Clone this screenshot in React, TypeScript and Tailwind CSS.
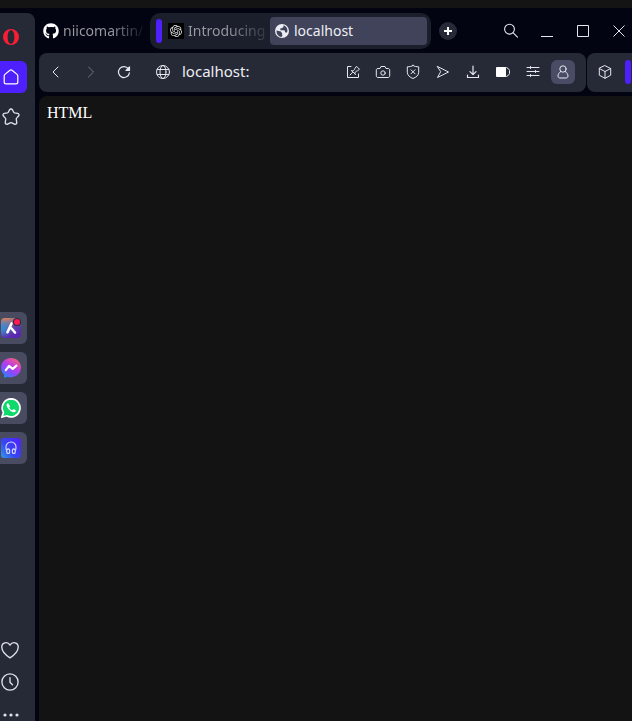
import type { ReactNode } from "react";
import { FaGithub } from "react-icons/fa";
import { SiOpenai } from "react-icons/si";

type IconProps = { children: ReactNode; size?: string; width?: number };

function Icon({ children, size = "size-4", width = 1 }: IconProps) {
  return (
    <svg
      viewBox="0 0 16 16"
      className={`${size} shrink-0`}
      fill="none"
      stroke="currentColor"
      strokeWidth={width}
      strokeLinecap="round"
      strokeLinejoin="round"
      aria-hidden="true"
    >
      {children}
    </svg>
  );
}

function ToolButton({ label, children, active = false }: { label: string; children: ReactNode; active?: boolean }) {
  return (
    <button
      aria-label={label}
      className={`flex size-6 shrink-0 items-center justify-center rounded-md text-[#e6e7ee] ${active ? "bg-[#4a4c66]" : ""}`}
    >
      {children}
    </button>
  );
}

function SideApp({ label, children }: { label: string; children: ReactNode }) {
  return (
    <button aria-label={label} className="flex h-8 w-full items-center rounded-r-md bg-[#494c60] pl-px">
      {children}
    </button>
  );
}

function Sidebar() {
  return (
    <aside className="flex w-[35px] shrink-0 flex-col rounded-tr-lg bg-[#262a37] pr-2 text-[#dfe0e8]">
      <button aria-label="Opera menu" className="flex h-12 w-full items-center pl-[3px]">
        <svg viewBox="0 0 16 16" className="size-4" aria-hidden="true">
          <path
            fill="#fa1e34"
            fillRule="evenodd"
            d="M8 0a8 8 0 1 0 0 16A8 8 0 0 0 8 0ZM8 1.2c2 0 3.400 2.700 3.400 6.800S10 14.800 8 14.800 4.600 12.100 4.600 8 6 1.200 8 1.200Z"
          />
        </svg>
      </button>
      <nav className="flex flex-col gap-2">
        <button aria-label="Home" className="flex h-8 w-full items-center rounded-r-md bg-[#4f20fe] pl-[3px] text-white">
          <Icon width={1.2}>
            <path d="M1.200 6.900c0-.6.300-1.100.7-1.500L7 1.200c.6-.5 1.400-.5 2 0l5.100 4.200c.4.400.7.900.7 1.500v6c0 1.100-.8 1.900-1.900 1.900H3.100c-1.100 0-1.900-.8-1.900-1.900z" />
          </Icon>
        </button>
        <button aria-label="Speed dial" className="flex h-8 w-full items-center pl-[2px]">
          <Icon size="size-[18px]" width={1.200}>
            <path d="M6.700 1.600c.5-.9 2.100-.9 2.600 0l1 2c.2.400.5.600.9.700l2.700.5c1.200.2 1.600 1.400.8 2.300l-1.700 1.900c-.3.300-.4.700-.3 1.100l.4 2.800c.2 1.200-1 1.900-2.100 1.400l-2.300-1.100c-.5-.2-.9-.2-1.400 0l-2.300 1.100c-1.100.5-2.300-.2-2.100-1.400l.4-2.800c.1-.4 0-.8-.3-1.100L1.300 7.100c-.8-.9-.4-2.100.8-2.300l2.700-.5c.4-.1.700-.3.900-.7z" />
          </Icon>
        </button>
      </nav>
      <div className="mt-[179px] flex flex-col gap-2">
        <SideApp label="Aria">
          <svg viewBox="0 0 20 20" className="size-5" aria-hidden="true">
            <defs>
              <linearGradient id="aria" x1="0" y1="0" x2="0.500" y2="1">
                <stop offset="0" stopColor="#ef8648" />
                <stop offset="0.350" stopColor="#95718a" />
                <stop offset="0.650" stopColor="#5c42a8" />
                <stop offset="1" stopColor="#5a25b4" />
              </linearGradient>
              <radialGradient id="ariaBlue" cx="0.100" cy="0.500" r="0.500">
                <stop offset="0" stopColor="#318ed8" />
                <stop offset="1" stopColor="#318ed8" stopOpacity="0" />
              </radialGradient>
            </defs>
            <rect width="20" height="20" rx="4" fill="url(#aria)" />
            <rect width="20" height="20" rx="4" fill="url(#ariaBlue)" />
            <path d="M10.500 5.500 6.500 14.200M10.500 10.500l3.500 4" stroke="#fff" strokeWidth="2.600" strokeLinecap="round" />
            <circle cx="16" cy="4" r="4" fill="#262a37" />
            <circle cx="16" cy="4" r="3" fill="#ff1a51" />
          </svg>
        </SideApp>
        <SideApp label="Messenger">
          <svg viewBox="0 0 20 20" className="size-5" aria-hidden="true">
            <defs>
              <linearGradient id="messenger" x1="0.800" y1="0" x2="0.150" y2="1">
                <stop offset="0" stopColor="#f8636e" />
                <stop offset="0.400" stopColor="#bd3de8" />
                <stop offset="0.650" stopColor="#854bff" />
                <stop offset="1" stopColor="#1594ff" />
              </linearGradient>
            </defs>
            <path d="M10 0C4.400 0 0 4.100 0 9.600c0 2.900 1.200 5.400 3.200 7.100V20l3.200-1.300c1.100.4 2.300.5 3.600.5 5.600 0 10-4.100 10-9.600S15.600 0 10 0Z" fill="url(#messenger)" />
            <path d="m4.800 12.200 3.200-4.200 3.700 2.800 3.700-3.200" fill="none" stroke="#fff" strokeWidth="2.200" strokeLinejoin="round" strokeLinecap="round" />
          </svg>
        </SideApp>
        <SideApp label="WhatsApp">
          <svg viewBox="0 0 20 20" className="size-5" aria-hidden="true">
            <path d="M10.200.9a9 9 0 0 0-7.800 13.500L1 19l4.700-1.200A9 9 0 1 0 10.200.9Z" fill="#10d96c" stroke="#fff" strokeWidth="1.700" />
            <path d="M7.300 5.400c-.4-.2-1 0-1.400.6-1.500 2.500 3.700 8.100 6.700 8.200 1.500.1 2.300-.9 2.200-2l-2.300-1.200-1.200 1.300c-1.400-.5-2.500-1.600-3.100-2.900l.8-1.200z" fill="#fff" />
          </svg>
        </SideApp>
        <SideApp label="Player">
          <svg viewBox="0 0 20 20" className="size-5" aria-hidden="true">
            <defs>
              <linearGradient id="player" x1="0" y1="1" x2="1" y2="0.200">
                <stop offset="0" stopColor="#319de8" />
                <stop offset="0.450" stopColor="#3547f2" />
                <stop offset="1" stopColor="#4f25fa" />
              </linearGradient>
            </defs>
            <rect width="20" height="20" rx="3" fill="url(#player)" />
            <g fill="none" stroke="#d9daff" strokeWidth="1.100">
              <path d="M5.600 12.500C4.900 10.900 5 9.500 5 9a5 5 0 0 1 10 0c0 .5.100 1.900-.6 3.500" />
              <ellipse cx="7.200" cy="13.200" rx="1.500" ry="2.300" />
              <ellipse cx="12.800" cy="13.200" rx="1.500" ry="2.300" />
            </g>
          </svg>
        </SideApp>
      </div>
      <div className="mt-auto flex flex-col">
        <button aria-label="Favourites" className="flex h-8 w-full items-center pl-px">
          <Icon size="size-[18px]" width={1.200}>
            <path d="M8 15C6.500 14 .7 9.700.7 5.300.7 1.200 5.900.100 8 3.700 10.100.100 15.300 1.200 15.300 5.300 15.300 9.700 9.500 14 8 15Z" />
          </Icon>
        </button>
        <button aria-label="History" className="flex h-8 w-full items-center pl-px">
          <Icon size="size-[18px]" width={1.200}>
            <circle cx="8" cy="8" r="7.200" />
            <path d="M8 4.200v4l2.200 2.300" />
          </Icon>
        </button>
        <button aria-label="More" className="flex h-[23px] w-full items-end pb-1 pl-[3px]">
          <svg viewBox="0 0 16 4" className="h-1 w-4 fill-current" aria-hidden="true">
            <circle cx="2" cy="2" r="1.600" />
            <circle cx="8" cy="2" r="1.600" />
            <circle cx="14" cy="2" r="1.600" />
          </svg>
        </button>
      </div>
    </aside>
  );
}

function TabStrip() {
  return (
    <header className="flex h-9 items-center">
      <button className="flex w-[107px] shrink-0 items-center gap-1 pl-1 text-left">
        <FaGithub className="size-4 shrink-0 text-white" />
        <span className="bg-linear-to-r from-[#9a9ba2] from-60% to-[#9a9ba2]/10 bg-clip-text whitespace-nowrap text-transparent">
          niicomartin/
        </span>
      </button>
      <div className="ml-1 flex h-9 min-w-0 items-center rounded-[10px] bg-[#1b1e2b] pr-1 pl-1.5">
        <span className="h-6 w-1.5 shrink-0 rounded-full bg-[#4f20fe]" />
        <button className="ml-1.5 flex w-[98px] shrink-0 items-center gap-1 text-left">
          <span className="flex size-4 shrink-0 items-center justify-center bg-black">
            <SiOpenai className="size-3 text-[#e5e5e5]" />
          </span>
          <span className="bg-linear-to-r from-[#9a9ba2] from-50% to-[#9a9ba2]/20 bg-clip-text whitespace-nowrap text-transparent">
            Introducing
          </span>
        </button>
        <button className="ml-1 flex h-7 w-[157px] shrink-0 items-center gap-1 rounded bg-[#40435a] pl-1 text-left text-[#eeeef4]">
          <svg viewBox="0 0 16 16" className="size-4" aria-hidden="true">
            <circle cx="8" cy="8" r="7" fill="#eceef3" />
            <path d="M2.600 7.400 6.800 8.600 8.200 10.500v3.300C4.600 14 2.100 11 2.600 7.400ZM9.500 2.200v1.600L8 5.200H6.400v2h4l1 2.400h1.600c1.200-2.900-.2-6.200-3.500-7.400Z" fill="#40435a" />
          </svg>
          localhost
        </button>
      </div>
      <button aria-label="New tab" className="ml-2 flex size-[18px] shrink-0 items-center justify-center rounded-full bg-[#262a37] text-white">
        <svg viewBox="0 0 8 8" className="size-2" aria-hidden="true">
          <path d="M4 0v8M0 4h8" stroke="currentColor" strokeWidth="2" />
        </svg>
      </button>
      <div className="ml-auto flex shrink-0 items-center gap-3 pr-px text-[#e7e8ee]">
        <ToolButton label="Search">
          <Icon width={1.100}>
            <circle cx="6.500" cy="6.200" r="4.900" />
            <path d="m10.200 9.800 4.300 4.300" />
          </Icon>
        </ToolButton>
        <ToolButton label="Minimize">
          <svg viewBox="0 0 12 12" className="size-3" aria-hidden="true">
            <path d="M0 11.500h12" stroke="currentColor" />
          </svg>
        </ToolButton>
        <ToolButton label="Maximize">
          <svg viewBox="0 0 12 12" className="size-3" aria-hidden="true">
            <path d="M.5.500h11v11H.5z" fill="none" stroke="currentColor" />
          </svg>
        </ToolButton>
        <ToolButton label="Close">
          <svg viewBox="0 0 12 12" className="size-3" aria-hidden="true">
            <path d="m.5.500 11 11m0-11-11 11" stroke="currentColor" />
          </svg>
        </ToolButton>
      </div>
    </header>
  );
}

function AddressBar() {
  return (
    <div className="flex h-[39px] gap-px">
      <div className="flex min-w-0 flex-1 items-center rounded-lg bg-[#262a37] pr-[11px] pb-px pl-[5px]">
        <div className="flex gap-2.5">
          <ToolButton label="Back">
            <Icon>
              <path d="m10 3-5 5 5 5" />
            </Icon>
          </ToolButton>
          <span className="flex opacity-40">
            <ToolButton label="Forward">
              <Icon>
                <path d="m6.500 3 5 5-5 5" />
              </Icon>
            </ToolButton>
          </span>
          <ToolButton label="Reload">
            <Icon width={1.200}>
              <path d="M13.400 8.800A5.500 5.500 0 1 1 12.400 4.800" />
              <path d="M13.500 3v3.500H10z" fill="currentColor" />
            </Icon>
          </ToolButton>
        </div>
        <span className="ml-[15px] flex">
          <ToolButton label="Site information">
            <Icon>
              <circle cx="8" cy="8" r="6.500" />
              <ellipse cx="8" cy="8" rx="3" ry="6.500" />
              <path d="M2.200 5.500h11.600M2.200 10.500h11.600" />
            </Icon>
          </ToolButton>
        </span>
        <input
          aria-label="Address"
          defaultValue="localhost:"
          className="ml-[7px] min-w-0 flex-1 bg-transparent text-[15px] text-[#eeeef4] outline-none"
        />
        <div className="flex shrink-0 gap-1.5">
          <ToolButton label="Edit page">
            <Icon>
              <path d="M6 2.500H2.500v11h11V10M5 11l2.500-2.500M6.500 6.500l4 4M7 7c1.500 0 2.500-.7 3-2.700l1.500-2 3 3-2 1.500c-2 .5-2.700 1.500-2.700 3" />
            </Icon>
          </ToolButton>
          <ToolButton label="Snapshot">
            <Icon>
              <path d="M3 4.500h2L6 2.500h4l1 2h2c1 0 1.700.6 1.700 1.600v5.700c0 1-.7 1.700-1.700 1.700H3c-1 0-1.700-.7-1.700-1.700V6.100c0-1 .7-1.600 1.700-1.600Z" />
              <circle cx="8" cy="9" r="2.200" />
            </Icon>
          </ToolButton>
          <ToolButton label="Ad blocker">
            <Icon>
              <path d="M8 1.500c1.500 1 3.500 1.300 5.700 1.300v5.400c0 3-2.500 5.100-5.700 6.300-3.200-1.200-5.700-3.300-5.700-6.300V2.800C4.500 2.800 6.500 2.500 8 1.500ZM6 5.800l4 4m0-4-4 4" />
            </Icon>
          </ToolButton>
          <ToolButton label="Send to My Flow">
            <Icon>
              <path d="M2.500 2.500 13.500 8l-11 5.500L5.500 8z" />
            </Icon>
          </ToolButton>
          <ToolButton label="Downloads">
            <Icon width={1.200}>
              <path d="M8 2v8.500M5 7.700l3 3 3-3M2.500 11v2.500h11V11" />
            </Icon>
          </ToolButton>
          <ToolButton label="Battery saver">
            <svg viewBox="0 0 16 16" className="size-4" aria-hidden="true">
              <rect x="1" y="3" width="10" height="10" rx="1" fill="#fff" />
              <path d="M10 3.500h1.500c.8 0 1.200.4 1.200 1.200.9.200 1.800.8 1.800 1.800v3c0 1-.9 1.600-1.800 1.800 0 .8-.4 1.200-1.200 1.200H10" fill="none" stroke="currentColor" />
            </svg>
          </ToolButton>
          <ToolButton label="Easy setup">
            <Icon>
              <path d="M2 3.500h12M2 7.500h12M2 11.500h12M5.500 2.500v2M10.500 6.500v2M5.500 10.500v2" />
            </Icon>
          </ToolButton>
          <ToolButton label="Profile" active>
            <Icon>
              <circle cx="8" cy="5" r="3.200" />
              <path d="M5.700 7.500C4 8.700 3 10.500 3 12c0 1.200.8 2 2 2h6c1.200 0 2-.8 2-2 0-1.500-1-3.300-2.700-4.500" />
            </Icon>
          </ToolButton>
        </div>
      </div>
      <div className="flex w-[45px] shrink-0 items-center justify-between rounded-l-lg bg-[#262a37] pb-px pl-1.5">
        <ToolButton label="Extensions">
          <Icon>
            <path d="m8 1.700 5.700 2.800v6.700L8 14.300l-5.700-3.100V4.500zM2.300 4.500 8 7.500l5.700-3M8 7.500v6.800" />
          </Icon>
        </ToolButton>
        <span className="mr-px h-6 w-1.5 rounded-full bg-[#4f20fe]" />
      </div>
    </div>
  );
}

export default function App() {
  return (
    <div className="flex min-h-screen flex-col bg-[#141414] pt-2 font-['Noto_Sans',sans-serif] text-sm">
      <div className="flex flex-1 overflow-hidden bg-[#020412] pt-[5px]">
        <Sidebar />
        <div className="flex min-w-0 flex-1 flex-col gap-1 pl-1">
          <TabStrip />
          <AddressBar />
          <main className="flex-1 rounded-tl-lg bg-[#131313] p-2 font-['Liberation_Serif',serif] text-base leading-[18px] text-white">
            HTML
          </main>
        </div>
      </div>
    </div>
  );
}
